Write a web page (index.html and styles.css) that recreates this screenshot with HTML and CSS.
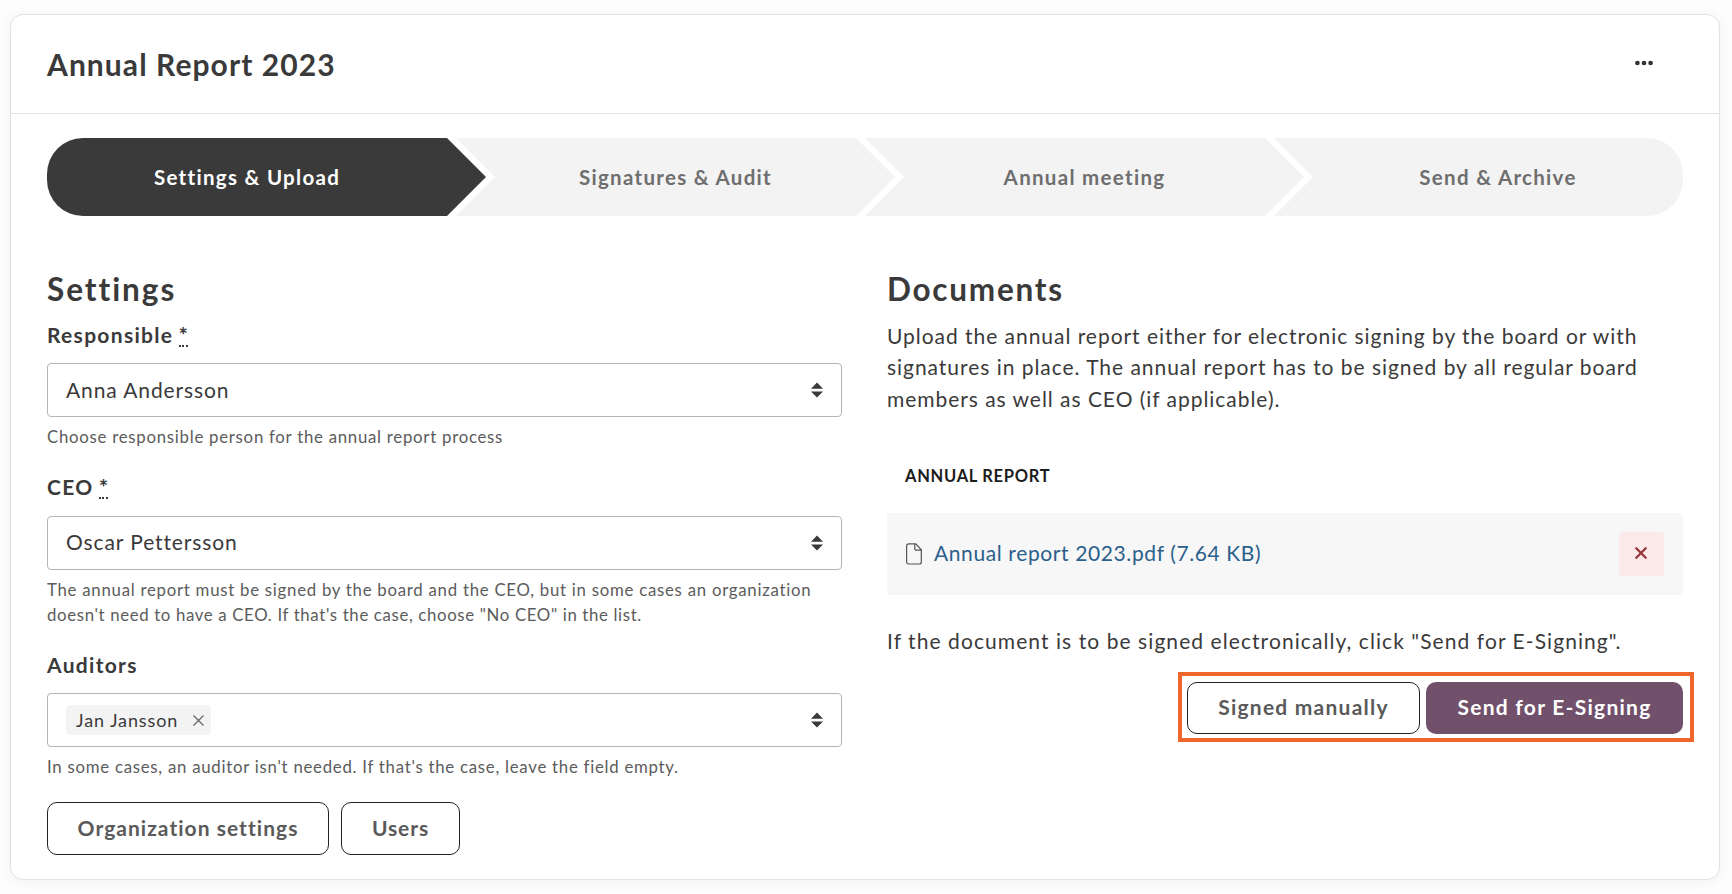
FILE: index.html
```html
<!DOCTYPE html>
<html lang="en">
<head>
<meta charset="utf-8">
<title>Annual Report 2023</title>
<link rel="stylesheet" href="styles.css">
</head>
<body>
<main class="card">
  <header class="card-header">
    <h1 class="title">Annual Report 2023</h1>
    <button class="more" aria-label="More">
      <svg width="20" height="8" viewBox="0 0 20 8" fill="currentColor"><circle cx="3.4" cy="4" r="2.35"/><circle cx="10" cy="4" r="2.35"/><circle cx="16.6" cy="4" r="2.35"/></svg>
    </button>
  </header>
  <nav class="steps">
    <div class="step step-first">Settings &amp; Upload</div>
    <div class="step">Signatures &amp; Audit</div>
    <div class="step">Annual meeting</div>
    <div class="step step-last">Send &amp; Archive</div>
  </nav>
  <div class="columns">
    <section class="settings">
      <h2 class="heading heading-settings">Settings</h2>
      <div class="field">
        <label class="label">Responsible <abbr class="required">*</abbr></label>
        <div class="select"><span class="value">Anna Andersson</span>
          <svg class="carets" width="12" height="16" viewBox="0 0 12 16" fill="currentColor"><path d="M6 .6 12 6.7H0ZM6 15.6 0 9.4h12Z"/></svg></div>
        <p class="help">Choose responsible person for the annual report process</p>
      </div>
      <div class="field">
        <label class="label">CEO <abbr class="required">*</abbr></label>
        <div class="select"><span class="value">Oscar Pettersson</span>
          <svg class="carets" width="12" height="16" viewBox="0 0 12 16" fill="currentColor"><path d="M6 .6 12 6.7H0ZM6 15.6 0 9.4h12Z"/></svg></div>
        <p class="help">The annual report must be signed by the board and the CEO, but in some cases an organization<br><span class="help-tight">doesn't need to have a CEO. If that's the case, choose "No CEO" in the list.</span></p>
      </div>
      <div class="field">
        <label class="label">Auditors</label>
        <div class="select"><span class="chip">Jan Jansson
          <svg width="11" height="11" viewBox="0 0 11 11" fill="none" stroke="#666" stroke-width="1.2"><path d="M.5.5l10 10M10.5.5l-10 10"/></svg></span>
          <svg class="carets" width="12" height="16" viewBox="0 0 12 16" fill="currentColor"><path d="M6 .6 12 6.7H0ZM6 15.6 0 9.4h12Z"/></svg></div>
        <p class="help">In some cases, an auditor isn't needed. If that's the case, leave the field empty.</p>
      </div>
      <div class="buttons">
        <button class="btn btn-org">Organization settings</button>
        <button class="btn btn-users">Users</button>
      </div>
    </section>
    <section class="documents">
      <h2 class="heading">Documents</h2>
      <p class="text">Upload the annual report either for electronic signing by the board or with<br>signatures in place. The annual report has to be signed by all regular board<br>members as well as CEO (if applicable).</p>
      <h3 class="doc-title">ANNUAL REPORT</h3>
      <div class="file">
        <svg width="16" height="22" viewBox="0 0 16 22" fill="none" stroke="#555" stroke-width="1.2"><path d="M2.6.9H9.8L15.3 6.8V19a2 2 0 0 1-2 2H2.6a2 2 0 0 1-2-2V2.9a2 2 0 0 1 2-2Z"/><path d="M8.8.9V5.9a1.3 1.3 0 0 0 1.3 1.3h5.2"/></svg>
        <a class="file-link">Annual report 2023.pdf (7.64 KB)</a>
        <button class="delete" aria-label="Delete">
          <svg width="12" height="12" viewBox="0 0 12 12" fill="none" stroke="currentColor" stroke-width="2.3" stroke-linecap="round"><path d="M1.3 1.3l9.4 9.4M10.7 1.3l-9.4 9.4"/></svg>
        </button>
      </div>
      <p class="text text-sign">If the document is to be signed electronically, click "Send for E-Signing".</p>
      <div class="highlight">
        <button class="btn btn-signed">Signed manually</button>
        <button class="btn btn-primary">Send for E-Signing</button>
      </div>
    </section>
  </div>
</main>
</body>
</html>
```
FILE: styles.css
```css
* { box-sizing: border-box; }
body {
  margin: 0;
  padding: 14px 12px 14px 10px;
  background: #fdfdfd;
  color: #3a3a3a;
  font-family: Lato, "Liberation Sans", sans-serif;
  font-size: 21px;
  overflow: hidden;
}
h1, h2, h3, p { margin: 0; }
button { font-family: inherit; border: 0; background: none; padding: 0; }
svg { display: block; flex: none; }

.card {
  height: 866px;
  background: #fff;
  border: 1px solid #e2e2e2;
  border-radius: 13px;
  box-shadow: 0 2px 14px rgba(0, 0, 0, .05);
}
.card-header {
  height: 99px;
  padding: 0 65px 0 36px;
  display: flex;
  align-items: center;
  justify-content: space-between;
  border-bottom: 1px solid #e2e2e2;
}
.title { padding-bottom: 1px; font-size: 30px; font-weight: 700; letter-spacing: 1.07px; }
.more { color: #333; padding-bottom: 2px; }

.steps {
  margin: 24px 36px 0;
  height: 78px;
  display: grid;
  grid-template-columns: repeat(4, 409px);
}
.step {
  width: 439px;
  display: flex;
  align-items: center;
  justify-content: center;
  background: #f3f3f3;
  color: #6e6e6e;
  font-size: 20.5px;
  font-weight: 700;
  letter-spacing: 1.3px;
  clip-path: polygon(0 0, 400px 0, 439px 50%, 400px 100%, 0 100%, 39px 50%);
}
.step-first {
  padding-right: 39px;
  background: #3a3a3a;
  color: #fff;
  border-radius: 36px 0 0 36px;
  clip-path: polygon(0 0, 400px 0, 439px 50%, 400px 100%, 0 100%);
}
.step-last {
  width: 409px;
  padding-left: 39px;
  border-radius: 0 36px 36px 0;
  clip-path: polygon(0 0, 100% 0, 100% 100%, 0 100%, 39px 50%);
}

.columns {
  margin: 53px 36px 0;
  display: grid;
  grid-template-columns: 795px 796px;
  column-gap: 45px;
}
.heading { font-size: 31.5px; line-height: 40px; font-weight: 700; letter-spacing: 1.75px; }
.heading-settings { letter-spacing: 1.95px; }
.settings .heading { margin-bottom: 11px; }
.documents .heading { margin-bottom: 10.6px; }

.field { margin-bottom: 23px; }
.label {
  display: block;
  height: 30px;
  margin-bottom: 13px;
  font-size: 21px;
  line-height: 30px;
  font-weight: 700;
  letter-spacing: 1.3px;
}
.required {
  display: inline-block;
  height: 27px;
  margin-left: -1px;
  line-height: 30px;
  letter-spacing: 0;
  font-weight: 900;
  border-bottom: 2px dotted #3a3a3a;
  vertical-align: top;
}
.field + .field .label { margin-bottom: 13.4px; }
.select {
  height: 54px;
  padding: 0 18px;
  display: flex;
  align-items: center;
  justify-content: space-between;
  border: 1px solid #b5b5b5;
  border-radius: 4px;
  letter-spacing: .9px;
}
.value { padding-bottom: 2px; }
.chip {
  height: 30px;
  padding: 0 7px 0 10px;
  display: flex;
  align-items: center;
  gap: 15px;
  background: #f3f3f3;
  border-radius: 5px;
  font-size: 18px;
  letter-spacing: .9px;
}
.help {
  margin-top: 7px;
  font-size: 16.8px;
  line-height: 25.2px;
  letter-spacing: .74px;
  color: #5c5c5c;
  white-space: nowrap;
}
.help-tight { letter-spacing: .65px; }

.buttons { margin-top: -.4px; display: flex; gap: 12px; }
.btn {
  height: 53px;
  padding-bottom: 2px;
  border: 1px solid #222;
  border-radius: 10px;
  background: #fff;
  color: #5a5a5a;
  font-size: 21px;
  font-weight: 700;
  letter-spacing: 1.22px;
}
.btn-org { width: 282px; letter-spacing: 1.03px; }
.btn-users { width: 119px; letter-spacing: .9px; }

.text { line-height: 31.5px; letter-spacing: .96px; white-space: nowrap; }
.text-sign { margin-top: 30.2px; letter-spacing: 1.07px; }
.doc-title {
  margin: 49.5px 0 25.4px 18px;
  font-size: 16.5px;
  line-height: 24px;
  font-weight: 700;
  letter-spacing: .7px;
  color: #1c1c1c;
}
.file {
  height: 82px;
  padding: 0 19px;
  display: flex;
  align-items: center;
  background: #f7f7f7;
  border-radius: 3px;
}
.file-link { margin-left: 12px; padding-bottom: 2px; color: #2b5f8c; letter-spacing: .61px; }
.delete {
  width: 45px;
  height: 44px;
  margin-left: auto;
  padding: 0 1px 2px 0;
  display: flex;
  align-items: center;
  justify-content: center;
  background: #fbe8e8;
  border-radius: 4px;
  color: #96333b;
}
.highlight {
  width: 516px;
  height: 70px;
  margin: 15.2px -11px 0 auto;
  padding: 6px 7px 4px 5px;
  display: flex;
  justify-content: space-between;
  border: 4px solid #f0652b;
}
.btn-signed { width: 233px; height: 52px; }
.btn-primary {
  width: 257px;
  height: 52px;
  border: 0;
  background: #70506b;
  color: #fff;
  letter-spacing: 1.27px;
}
```
